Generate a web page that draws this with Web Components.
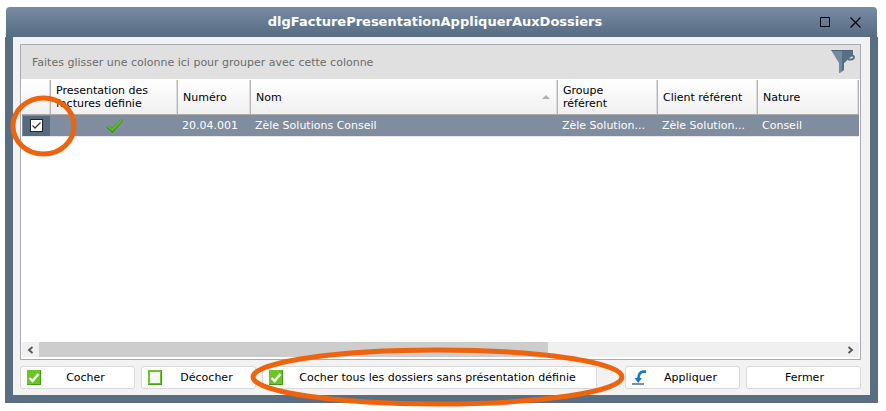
<!DOCTYPE html>
<html lang="fr">
<head>
<meta charset="utf-8">
<meta name="viewport" content="width=device-width, initial-scale=1">
<title>dlgFacturePresentationAppliquerAuxDossiers</title>
<style>
    body{
        margin: 0;
        background: #fff;
        color: #000;
        font: 11px/13px "DejaVu Sans", Verdana, sans-serif;
    }
</style>
</head>
<body>

<dlg-fenetre titre="dlgFacturePresentationAppliquerAuxDossiers">
    <dlg-grille></dlg-grille>

    <dlg-bouton slot="actions" icone="coche">Cocher</dlg-bouton>
    <dlg-bouton slot="actions" icone="vide">Décocher</dlg-bouton>
    <dlg-bouton slot="actions" icone="coche" large repere>Cocher tous les dossiers sans présentation définie</dlg-bouton>

    <dlg-bouton slot="validation" icone="appliquer">Appliquer</dlg-bouton>
    <dlg-bouton slot="validation">Fermer</dlg-bouton>
</dlg-fenetre>

<script>
const ICONES = {
    coche: `
        <svg width="14" height="15" viewBox="0 0 14 15" aria-hidden="true">
            <rect width="14" height="15" fill="#459c16"/>
            <rect width="13" height="14" fill="#6cc427"/>
            <path d="M2.5 8 5.5 11 11.5 4" fill="none" stroke="#fff" stroke-width="2.4"/>
        </svg>`,
    vide: `
        <svg width="14" height="15" viewBox="0 0 14 15" aria-hidden="true">
            <rect width="14" height="15" fill="#459c16"/>
            <rect width="13" height="14" fill="#6cc427"/>
            <rect x="2" y="2" width="10" height="11" fill="#f6f8f4"/>
        </svg>`,
    appliquer: `
        <svg width="14" height="15" viewBox="0 0 14 15" aria-hidden="true">
            <path d="M14 1.6H11Q6.5 2 6.4 9" fill="none" stroke="#1479c4" stroke-width="2.6"/>
            <path d="M2.5 8H10L6.2 13Z" fill="#1479c4"/>
            <rect y="13" width="12" height="2" fill="#7c90a6"/>
        </svg>`
};

/* Anneau orange posé autour de l'élément parent */
class DlgRepere extends HTMLElement {

    constructor(){
        super();
        this.attachShadow({ mode: 'open' }).innerHTML = `
            <style>
                :host{
                    position: absolute;
                    z-index: 5;
                    pointer-events: none;
                }

                svg{
                    display: block;
                    width: 100%;
                    height: 100%;
                }

                ellipse{
                    cx: 50%;
                    cy: 50%;
                    rx: calc(50% - 3px);
                    ry: calc(50% - 3px);
                    fill: none;
                    stroke: #ee640e;
                    stroke-width: 5px;
                }
            </style>

            <svg aria-hidden="true"><ellipse/></svg>
        `;
    }
}

class DlgBouton extends HTMLElement {

    constructor(){
        super();
        this._shadow = this.attachShadow({ mode: 'open' });
    }

    connectedCallback(){
        const icone = ICONES[this.getAttribute("icone")] || "";

        this._shadow.innerHTML = `
            <style>
                :host{
                    display: block;
                    position: relative;
                    min-width: 115px;
                }

                :host([large]){
                    min-width: 335px;
                }

                button{
                    display: flex;
                    align-items: center;
                    box-sizing: border-box;
                    width: 100%;
                    height: 23px;
                    margin: 0;
                    padding: 0 4px 0 6px;
                    border: 1px solid #d9d9d9;
                    border-radius: 3px;
                    background: #fff;
                    color: inherit;
                    font: inherit;
                    cursor: pointer;
                }

                button:hover{
                    background: #f7f9fb;
                }

                svg{
                    flex: none;
                }

                span{
                    flex: 1;
                    text-align: center;
                    white-space: nowrap;
                }

                dlg-repere{
                    inset: -19px -28px -18px -12px;
                }
            </style>

            <button type="button">${icone}<span><slot></slot></span></button>
            ${this.hasAttribute("repere") ? "<dlg-repere></dlg-repere>" : ""}
        `;
    }
}

class DlgGrille extends HTMLElement {

    constructor(){
        super();
        this._shadow = this.attachShadow({ mode: 'open' });
    }

    connectedCallback(){

        this._shadow.innerHTML = `
            <style>
                :host{
                    display: flex;
                    flex-direction: column;
                    flex: 1;
                    border: 1px solid #a8abb3;
                    background: #fff;
                }

                .groupe{
                    display: flex;
                    align-items: center;
                    justify-content: space-between;
                    height: 34px;
                    padding: 0 5px 0 11px;
                    background: #e0e0e0;
                    color: #6c6c6c;
                }

                .groupe button{
                    display: flex;
                    padding: 0;
                    border: none;
                    background: none;
                    cursor: pointer;
                }

                .zone{
                    flex: 1;
                    padding: 1px 1px 0;
                }

                table{
                    width: 100%;
                    table-layout: fixed;
                    border-collapse: separate;
                    border-spacing: 0;
                }

                .c-case{ width: 29px; }
                .c-presentation{ width: 127px; }
                .c-numero{ width: 73px; }
                .c-texte{ width: 100px; }
                .c-nature{ width: 101px; }

                th, td{
                    box-sizing: border-box;
                    padding: 0 5px;
                    text-align: left;
                    font-weight: normal;
                }

                th{
                    height: 35px;
                    border-right: 1px solid #b4b4b4;
                    border-bottom: 1px solid #a9a9a9;
                    background: linear-gradient(#fff, #f0f0f0);
                    box-shadow: inset -1px 0 #dcdcdc;
                }

                .tri{
                    display: flex;
                    align-items: center;
                    justify-content: space-between;
                    padding-right: 2px;
                }

                td{
                    height: 22px;
                    padding: 0 4px;
                    background: #7f8d9e;
                    border-bottom: 1px solid #e4e6ea;
                    color: #fff;
                    white-space: nowrap;
                }

                td.centre{
                    text-align: center;
                }

                td.centre svg{
                    display: block;
                    margin: 0 auto;
                }

                td.case{
                    padding: 0 1px;
                }

                .choix{
                    position: relative;
                    display: flex;
                    align-items: center;
                    height: 20px;
                    padding-left: 7px;
                    background: #566b80;
                }

                .choix input{
                    appearance: none;
                    width: 13px;
                    height: 13px;
                    margin: 0;
                    border: 1px solid #222;
                    background: #fff;
                }

                .choix input:checked{
                    background: #fff url("data:image/svg+xml,%3Csvg xmlns='http://www.w3.org/2000/svg' viewBox='0 0 11 11'%3E%3Cpath d='M1.5 5.5 4 8 9.5 2.5' fill='none' stroke='%23333' stroke-width='1.3'/%3E%3C/svg%3E");
                }

                .choix dlg-repere{
                    inset: -21px -27px -21px -13px;
                }

                .defilement{
                    display: flex;
                    height: 15px;
                    margin: 0 1px 2px;
                    background: #f0f0f0;
                }

                .defilement button{
                    display: flex;
                    align-items: center;
                    justify-content: center;
                    width: 17px;
                    padding: 0;
                    border: none;
                    background: none;
                }

                .piste{
                    display: flex;
                    flex: 1;
                }

                .curseur{
                    flex: 26;
                    background: #cdcdcd;
                }

                .reste{
                    flex: 15;
                }
            </style>

            <div class="groupe">
                <span>Faites glisser une colonne ici pour grouper avec cette colonne</span>
                <button type="button" aria-label="Filtrer">
                    <svg width="24" height="24" viewBox="0 0 24 24">
                        <path d="M0 0H22V4L13 13V20L9 23H8V13Z" fill="#718b9a"/>
                        <path d="M11 0H22V5L13 13V20L11 21Z" fill="#567082"/>
                        <path d="M0 0H22V1H1Z" fill="#4d6577"/>
                        <path d="M19 5.500H21Q23 5.500 23 7.500Q22.500 9.500 20 9.500H17" fill="none" stroke="#567082" stroke-width="1.800"/>
                    </svg>
                </button>
            </div>

            <div class="zone">
                <table>
                    <colgroup>
                        <col class="c-case">
                        <col class="c-presentation">
                        <col class="c-numero">
                        <col>
                        <col class="c-texte">
                        <col class="c-texte">
                        <col class="c-nature">
                    </colgroup>
                    <thead>
                        <tr>
                            <th></th>
                            <th>Presentation des<br>factures définie</th>
                            <th>Numéro</th>
                            <th aria-sort="ascending">
                                <div class="tri">
                                    <span>Nom</span>
                                    <svg width="8" height="4" viewBox="0 0 8 4"><path d="M0 4 4 0 8 4Z" fill="#b0b0b0"/></svg>
                                </div>
                            </th>
                            <th>Groupe<br>référent</th>
                            <th>Client référent</th>
                            <th>Nature</th>
                        </tr>
                    </thead>
                    <tbody>
                        <tr>
                            <td class="case">
                                <div class="choix">
                                    <input type="checkbox" aria-label="Sélectionner 20.04.001" checked>
                                    <dlg-repere></dlg-repere>
                                </div>
                            </td>
                            <td class="centre">
                                <svg width="17" height="14" viewBox="0 0 17 14">
                                    <path d="M0 8.500 2.500 6.500 6 9 14.500 .5 17 2 6.500 14Z" fill="#3f9416"/>
                                    <path d="M1 8 2.500 7 6 10 14.500 1 16 2 6.500 12Z" fill="#5dc21f"/>
                                </svg>
                            </td>
                            <td>20.04.001</td>
                            <td>Zèle Solutions Conseil</td>
                            <td>Zèle Solution...</td>
                            <td>Zèle Solution...</td>
                            <td>Conseil</td>
                        </tr>
                    </tbody>
                </table>
            </div>

            <div class="defilement">
                <button type="button" aria-label="Défiler à gauche">
                    <svg width="7" height="8" viewBox="0 0 7 8"><path d="M5.500 1 2 4 5.500 7" fill="none" stroke="#555" stroke-width="1.800"/></svg>
                </button>
                <div class="piste"><div class="curseur"></div><div class="reste"></div></div>
                <button type="button" aria-label="Défiler à droite">
                    <svg width="7" height="8" viewBox="0 0 7 8"><path d="M1.500 1 5 4 1.500 7" fill="none" stroke="#555" stroke-width="1.800"/></svg>
                </button>
            </div>
        `;
    }
}

class DlgFenetre extends HTMLElement {

    constructor(){
        super();
        this._shadow = this.attachShadow({ mode: 'open' });
    }

    connectedCallback(){

        this._shadow.innerHTML = `
            <style>
                :host{
                    display: flex;
                    flex-direction: column;
                    box-sizing: border-box;
                    min-height: 100vh;
                    padding: 7px 8px 8px 5px;
                }

                header{
                    display: flex;
                    align-items: center;
                    height: 30px;
                    margin: 0 1px;
                    padding: 0 16px 0 44px;
                    border-radius: 4px 4px 0 0;
                    background: linear-gradient(#778ba4, #566c80);
                }

                h1{
                    flex: 1;
                    margin: 0;
                    color: #fff;
                    font-size: 13px;
                    line-height: 16px;
                    font-weight: bold;
                    text-align: center;
                }

                header div{
                    display: flex;
                    gap: 19px;
                }

                header button{
                    display: flex;
                    padding: 0;
                    border: none;
                    background: none;
                    cursor: pointer;
                }

                main{
                    display: flex;
                    flex-direction: column;
                    flex: 1;
                    gap: 6px;
                    padding: 7px 9px 6px 7px;
                    border: 8px solid #5a6e82;
                    border-top: none;
                    background: #f2f2f2;
                }

                footer, footer div{
                    display: flex;
                    gap: 6px;
                }

                footer{
                    justify-content: space-between;
                }
            </style>

            <header>
                <h1></h1>
                <div>
                    <button type="button" aria-label="Agrandir">
                        <svg width="11" height="11" viewBox="0 0 11 11"><path d="M.5.5H9.500V9.500H.5Z" fill="none" stroke="#000"/></svg>
                    </button>
                    <button type="button" aria-label="Quitter">
                        <svg width="11" height="11" viewBox="0 0 11 11"><path d="M.5.5 10.500 10.500M10.500.5.5 10.500" fill="none" stroke="#000" stroke-width="1.200"/></svg>
                    </button>
                </div>
            </header>

            <main>
                <slot></slot>
                <footer>
                    <div><slot name="actions"></slot></div>
                    <div><slot name="validation"></slot></div>
                </footer>
            </main>
        `;

        this._shadow.querySelector("h1").textContent = this.getAttribute("titre");
    }
}

customElements.define("dlg-repere", DlgRepere);
customElements.define("dlg-bouton", DlgBouton);
customElements.define("dlg-grille", DlgGrille);
customElements.define("dlg-fenetre", DlgFenetre);
</script>
</body>
</html>
